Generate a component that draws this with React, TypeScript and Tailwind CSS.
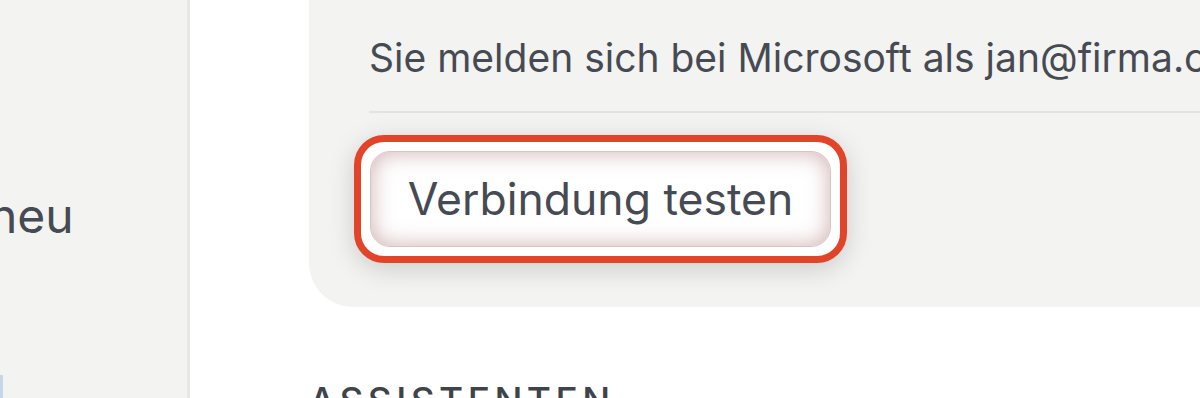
import React from "react";

export default function App() {
  return (
    <div className="w-[1200px] h-[398px] overflow-hidden flex bg-white font-['Inter',sans-serif] text-[#464a53]">
      <aside className="w-[190px] shrink-0 bg-[#f3f3f1] border-r-[3px] border-[#e6e6e3] flex flex-col overflow-hidden">
        <div className="mt-[188px] -ml-[11px] text-[48px] leading-[56px] whitespace-nowrap">neu</div>
        <div className="mt-[131px] w-[3px] h-[23px] bg-[#c3d8e8]" />
      </aside>
      <main className="flex-1 min-w-0 pl-[119px] flex flex-col">
        <section className="w-[1000px] shrink-0 bg-[#f3f3f1] rounded-bl-[44px] pl-[60px] pt-[34px] pb-[44px]">
          <p className="text-[39px] leading-[48px] whitespace-nowrap">
            Sie melden sich bei Microsoft als jan@firma.com
          </p>
          <div className="mt-[29px] h-[2px] bg-[#e4e3df]" />
          <div className="mt-[22px] -ml-[15px] inline-flex rounded-[30px] border-[7px] border-[#e2442a] bg-white p-[9px] shadow-[0_6px_26px_rgba(0,0,0,0.16)]">
            <button className="h-[96px] w-[461px] rounded-[20px] bg-white border border-[#d8c4c3] shadow-[inset_0_0_22px_rgba(170,110,110,0.55)] text-[44.5px] leading-none text-[#464a53] flex items-center justify-center">
              Verbindung testen
            </button>
          </div>
        </section>
        <h2 className="mt-[74px] text-[37px] leading-[40px] font-medium tracking-[0.12em] uppercase text-[#3f434a] whitespace-nowrap">
          Assistenten
        </h2>
      </main>
    </div>
  );
}
